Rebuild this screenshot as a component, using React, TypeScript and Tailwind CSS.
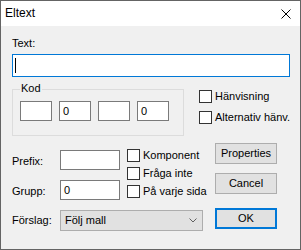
import React from "react";

function Check({ label }: { label: string }) {
  return (
    <label className="flex items-center gap-[3px] h-[13px] whitespace-nowrap">
      <span className="w-[13px] h-[13px] shrink-0 border border-[#333333] bg-white" />
      <span>{label}</span>
    </label>
  );
}

function Box({ value = "", className = "" }: { value?: string; className?: string }) {
  return (
    <div className={`h-[20px] border border-[#7a7a7a] bg-white pl-[3px] flex items-center ${className}`}>
      {value}
    </div>
  );
}

function Btn({ label, primary = false, className = "" }: { label: string; primary?: boolean; className?: string }) {
  return (
    <button
      className={`w-[62px] h-[21px] flex items-center justify-center bg-[#e1e1e1] ${
        primary ? "border-2 border-[#0078d7]" : "border border-[#adadad]"
      } ${className}`}
    >
      {label}
    </button>
  );
}

export default function App() {
  return (
    <div className="w-[301px] h-[250px] border border-[#646464] bg-[#f0f0f0] flex flex-col text-[11px] leading-[13px] text-black font-['Liberation_Sans',Arial,sans-serif]">
      {/* TITLE BAR */}
      <div className="h-[25px] shrink-0 bg-white flex items-center justify-between pl-[4px] pr-[9px]">
        <span className="text-[12px]">Eltext</span>
        <svg width="10" height="10" viewBox="0 0 10 10" className="block">
          <path d="M0.5 0.5 L9.5 9.5 M9.5 0.5 L0.5 9.5" stroke="#000" strokeWidth="1" fill="none" />
        </svg>
      </div>

      <div className="pl-[11px]">
        {/* TEXT */}
        <div className="mt-[11px]">Text:</div>
        <div className="mt-[4px] w-[278px] h-[23px] border border-[#0078d7] bg-white flex items-center pl-[2px]">
          <span className="w-px h-[15px] bg-black" />
        </div>

        {/* KOD + REFERENCES */}
        <div className="mt-[12px] flex items-start">
          <div className="relative w-[172px] h-[47px] border border-[#dcdcdc]">
            <span className="absolute -top-[8px] left-[7px] px-[1px] bg-[#f0f0f0]">Kod</span>
            <div className="mt-[11px] ml-[7px] flex gap-[7px]">
              <Box className="w-[32px]" />
              <Box className="w-[32px]" value="0" />
              <Box className="w-[32px]" />
              <Box className="w-[32px]" value="0" />
            </div>
          </div>
          <div className="ml-[15px] mt-[1px] flex flex-col gap-[8px]">
            <Check label="Hänvisning" />
            <Check label="Alternativ hänv." />
          </div>
        </div>

        {/* BOTTOM */}
        <div className="mt-[7px] flex items-start">
          <div className="w-[191px]">
            <div className="flex items-start">
              <div className="mt-[7px]">
                <div className="flex items-start">
                  <span className="w-[48px] mt-[5px]">Prefix:</span>
                  <Box className="w-[60px]" />
                </div>
                <div className="mt-[10px] flex items-start">
                  <span className="w-[48px] mt-[5px]">Grupp:</span>
                  <Box className="w-[60px]" value="0" />
                </div>
              </div>
              <div className="ml-[7px] mt-[6px] flex flex-col gap-[5px]">
                <Check label="Komponent" />
                <Check label="Fråga inte" />
                <Check label="På varje sida" />
              </div>
            </div>
            <div className="mt-[10px] flex items-start">
              <span className="w-[48px] mt-[4px]">Förslag:</span>
              <div className="w-[143px] h-[21px] border border-[#adadad] bg-[#e1e1e1] flex items-center justify-between pl-[4px] pr-[5px]">
                <span>Följ mall</span>
                <svg width="8" height="5" viewBox="0 0 8 5" className="block">
                  <path d="M0.5 0.5 L4 4 L7.5 0.5" stroke="#606060" strokeWidth="1" fill="none" />
                </svg>
              </div>
            </div>
          </div>

          <div className="ml-[12px] flex flex-col">
            <Btn label="Properties" />
            <Btn label="Cancel" className="mt-[9px]" />
            <Btn label="OK" primary className="mt-[14px]" />
          </div>
        </div>
      </div>
    </div>
  );
}
